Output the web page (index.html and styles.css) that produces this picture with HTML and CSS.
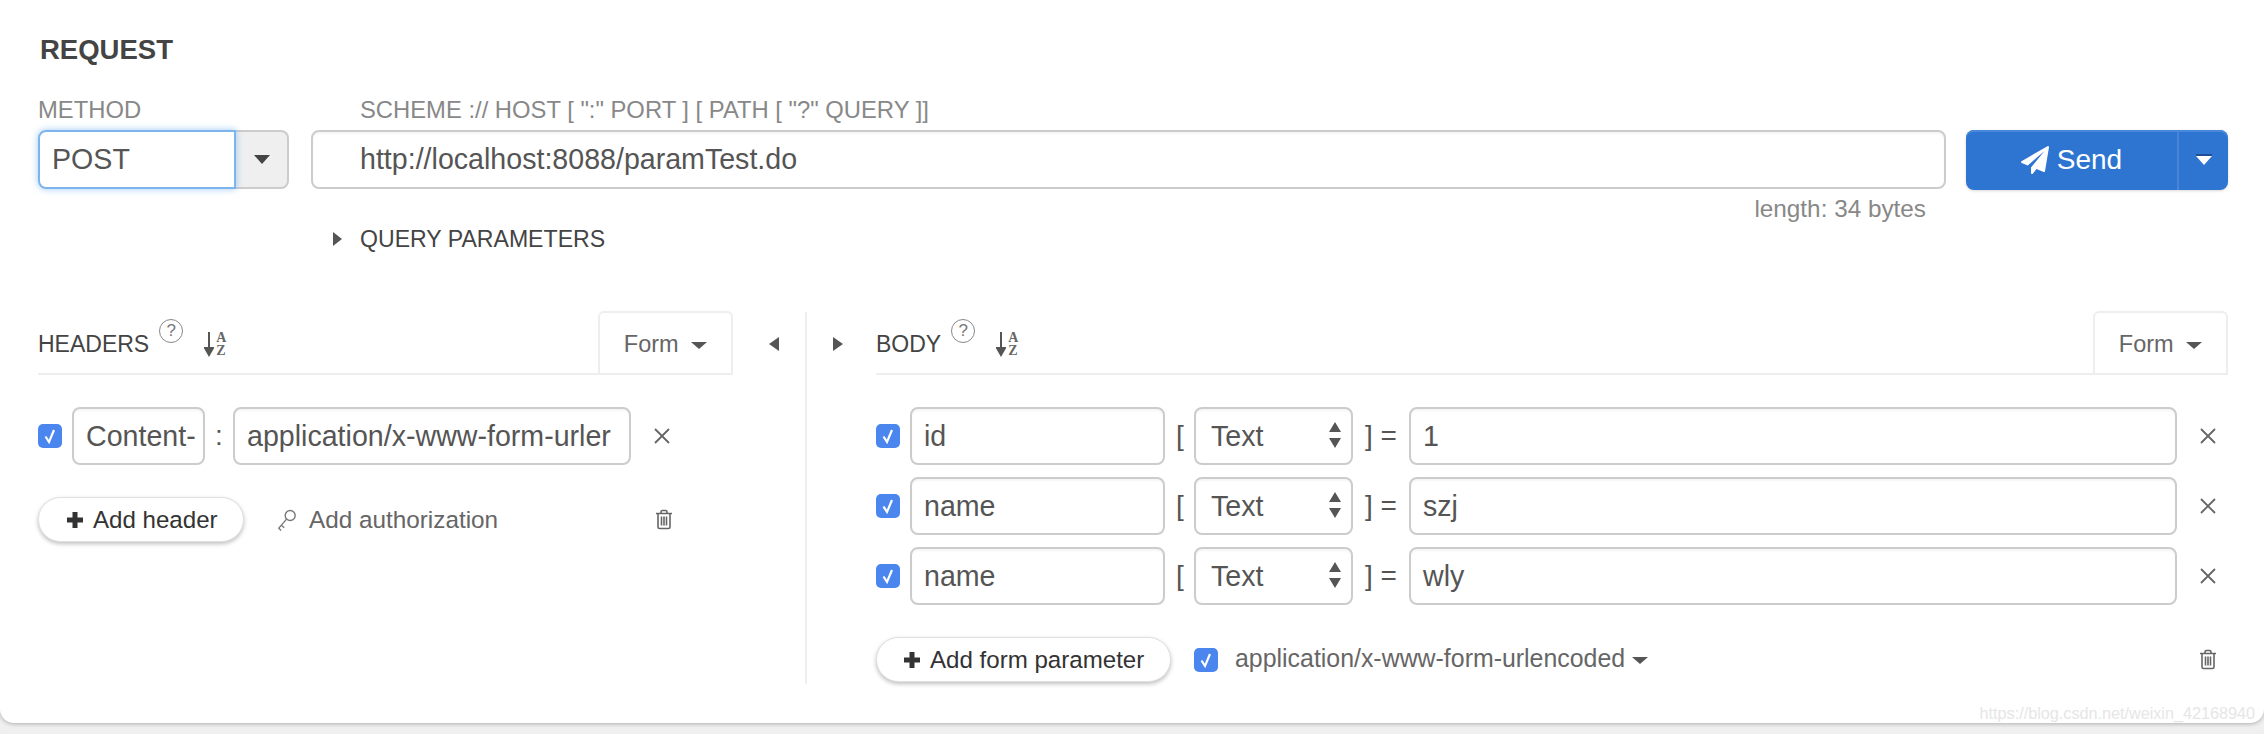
FILE: index.html
```html
<!DOCTYPE html>
<html lang="en">
<head>
<meta charset="utf-8">
<title>Request</title>
<link rel="stylesheet" href="styles.css">
</head>
<body>
<main class="card">
  <h2 class="title">REQUEST</h2>
  <section class="request-line">
    <div class="method">
      <div class="label">METHOD</div>
      <div class="method-group">
        <div class="method-input">POST</div>
        <div class="method-caret"><span class="tri-down dark"></span></div>
      </div>
    </div>
    <div class="url">
      <div class="label url-label">SCHEME :// HOST [ ":" PORT ] [ PATH [ "?" QUERY ]]</div>
      <div class="field url-input">http://localhost:8088/paramTest.do</div>
      <div class="length">length: 34 bytes</div>
      <div class="query"><span class="tri-right"></span><span>QUERY PARAMETERS</span></div>
    </div>
    <div class="send-col">
      <div class="send">
        <div class="send-main">
          <svg class="plane" viewBox="0 0 1792 1792"><path d="M1764 11q33 24 27 64l-256 1536q-5 29-32 45-14 8-31 8-11 0-24-5l-453-185-242 295q-18 23-49 23-13 0-22-4-19-7-30.500-23.500t-11.500-36.500v-349l864-1059-1069 925-395-162q-37-14-40-55-2-40 32-59l1664-960q15-9 32-9 20 0 36 11z"/></svg>
          <span>Send</span>
        </div>
        <div class="send-caret"><span class="tri-down white"></span></div>
      </div>
    </div>
  </section>

  <section class="panels">
    <div class="left">
      <div class="panel-head">
        <span class="panel-title">HEADERS</span>
        <span class="help">?</span>
        <span class="sort"><svg viewBox="0 0 10 26"><path d="M5 1v20M1 17 5 24l4-7z"/></svg><span class="az"><span>A</span><span>Z</span></span></span>
        <span class="tab">Form <span class="tri-down gray"></span></span>
      </div>
      <div class="row header-row">
        <span class="check"><svg viewBox="0 0 24 24"><path d="M7.500 12.500 11 18l5-12"/></svg></span>
        <div class="field hname">Content-</div>
        <span class="colon">:</span>
        <div class="field hvalue">application/x-www-form-urler</div>
        <svg class="x" viewBox="0 0 16 16"><path d="M1 1l14 14M15 1 1 15"/></svg>
      </div>
      <div class="actions">
        <div class="pill add-header"><svg class="plus" viewBox="0 0 18 18"><path d="M9 1v16M1 9h16"/></svg>Add header</div>
        <svg class="key" viewBox="0 0 22 26"><circle cx="14.500" cy="8" r="5.500"/><path d="M10.500 12 2 22l2.500 2.500M5 19l3 2.500"/></svg>
        <span class="auth">Add authorization</span>
        <svg class="trash trash-left" viewBox="0 0 18 20"><path d="M1 4h16M3 4v13.500Q3 19 4.500 19h9q1.500 0 1.500-1.500V4M6 4V2.500Q6 1 7.500 1h3Q12 1 12 2.500V4M6.500 7v9M9 7v9M11.500 7v9"/></svg>
      </div>
    </div>
    <div class="splitter"><span class="tri-left"></span></div>
    <div class="right">
      <div class="expand"><span class="tri-right big"></span></div>
      <div class="body-panel">
        <div class="panel-head">
          <span class="panel-title">BODY</span>
          <span class="help">?</span>
          <span class="sort"><svg viewBox="0 0 10 26"><path d="M5 1v20M1 17 5 24l4-7z"/></svg><span class="az"><span>A</span><span>Z</span></span></span>
          <span class="tab">Form <span class="tri-down gray"></span></span>
        </div>
        <div class="params">
          <div class="row">
            <span class="check"><svg viewBox="0 0 24 24"><path d="M7.500 12.500 11 18l5-12"/></svg></span>
            <div class="field pname">id</div>
            <span class="bracket">[</span>
            <div class="field ptype">Text<svg class="updown" viewBox="0 0 14 28"><path d="M7 1l6 10H1zM7 27l6-10H1z"/></svg></div>
            <span class="bracket close">] =</span>
            <div class="field pvalue">1</div>
            <svg class="x" viewBox="0 0 16 16"><path d="M1 1l14 14M15 1 1 15"/></svg>
          </div>
          <div class="row">
            <span class="check"><svg viewBox="0 0 24 24"><path d="M7.500 12.500 11 18l5-12"/></svg></span>
            <div class="field pname">name</div>
            <span class="bracket">[</span>
            <div class="field ptype">Text<svg class="updown" viewBox="0 0 14 28"><path d="M7 1l6 10H1zM7 27l6-10H1z"/></svg></div>
            <span class="bracket close">] =</span>
            <div class="field pvalue">szj</div>
            <svg class="x" viewBox="0 0 16 16"><path d="M1 1l14 14M15 1 1 15"/></svg>
          </div>
          <div class="row">
            <span class="check"><svg viewBox="0 0 24 24"><path d="M7.500 12.500 11 18l5-12"/></svg></span>
            <div class="field pname">name</div>
            <span class="bracket">[</span>
            <div class="field ptype">Text<svg class="updown" viewBox="0 0 14 28"><path d="M7 1l6 10H1zM7 27l6-10H1z"/></svg></div>
            <span class="bracket close">] =</span>
            <div class="field pvalue">wly</div>
            <svg class="x" viewBox="0 0 16 16"><path d="M1 1l14 14M15 1 1 15"/></svg>
          </div>
        </div>
        <div class="actions body-actions">
          <div class="pill add-param"><svg class="plus" viewBox="0 0 18 18"><path d="M9 1v16M1 9h16"/></svg>Add form parameter</div>
          <span class="check"><svg viewBox="0 0 24 24"><path d="M7.500 12.500 11 18l5-12"/></svg></span>
          <span class="ctype">application/x-www-form-urlencoded <span class="tri-down gray"></span></span>
          <svg class="trash trash-right" viewBox="0 0 18 20"><path d="M1 4h16M3 4v13.500Q3 19 4.500 19h9q1.500 0 1.500-1.500V4M6 4V2.500Q6 1 7.500 1h3Q12 1 12 2.500V4M6.500 7v9M9 7v9M11.500 7v9"/></svg>
        </div>
      </div>
    </div>
  </section>
  <div class="watermark">https://blog.csdn.net/weixin_42168940</div>
</main>
</body>
</html>
```
FILE: styles.css
```css
* { box-sizing: border-box; }
html, body { margin: 0; height: 734px; overflow: hidden; }
body {
  background: #f0f0f0;
  font-family: "Liberation Sans", Arial, sans-serif;
  color: #555;
}
.card {
  position: relative;
  height: 723px;
  background: #fff;
  border-radius: 0 0 14px 14px;
  box-shadow: 0 1px 4px rgba(0,0,0,.28);
  padding: 36px 36px 0 38px;
}
.title {
  margin: 0;
  font-size: 27.500px;
  line-height: 28px;
  font-weight: bold;
  color: #444;
  padding-left: 2px;
}
.request-line { display: flex; margin-top: 33px; }
.label {
  font-size: 23.800px;
  line-height: 26px;
  color: #888;
  height: 26px;
  white-space: nowrap;
}
.method { width: 251px; margin-right: 22px; }
.method-group { display: flex; height: 59px; margin-top: 7px; }
.method-input {
  width: 198px;
  border: 2px solid #7db4ee;
  border-radius: 8px 0 0 8px;
  box-shadow: 0 0 7px rgba(82,160,240,.55);
  padding-left: 12px;
  font-size: 28.600px;
  line-height: 54px;
  color: #555;
  position: relative;
}
.method-caret {
  flex: 1;
  background: #efefef;
  border: 2px solid #ccc;
  border-left: 0;
  border-radius: 0 8px 8px 0;
  display: flex;
  align-items: center;
  justify-content: center;
}
.url { flex: 1; }
.url-label { padding-left: 49px; }
.field {
  border: 2px solid #ccc;
  border-radius: 8px;
  box-shadow: inset 0 2px 2px rgba(0,0,0,.04);
  font-size: 28.600px;
  line-height: 54px;
  height: 58px;
  white-space: nowrap;
  overflow: hidden;
  color: #555;
}
.url-input { height: 59px; margin-top: 7px; padding-left: 47px; }
.length {
  text-align: right;
  font-size: 24.300px;
  line-height: 26px;
  color: #888;
  margin-top: 7px;
  padding-right: 20px;
}
.query {
  display: flex;
  align-items: center;
  font-size: 23.100px;
  line-height: 26px;
  color: #444;
  margin-top: 4px;
  padding-left: 22px;
}
.query .tri-right { margin-right: 18px; }
.send-col { width: 262px; margin-left: 20px; padding-top: 33px; }
.send {
  display: flex;
  height: 60px;
  background: #2e75d2;
  border-radius: 8px;
  box-shadow: inset 0 2px 0 #4a88dc, 0 1px 3px rgba(0,0,0,.15);
  color: #fff;
}
.send-main {
  width: 213px;
  display: flex;
  align-items: center;
  justify-content: center;
  gap: 8px;
  font-size: 28px;
  border-right: 2px solid #4a84d8;
}
.plane { width: 28px; height: 28px; fill: #fff; }
.send-caret { flex: 1; display: flex; align-items: center; justify-content: center; }
.tri-down {
  display: inline-block;
  width: 0; height: 0;
  border-left: 8px solid transparent;
  border-right: 8px solid transparent;
  border-top: 9px solid #444;
  vertical-align: middle;
}
.tri-down.white { border-top-color: #fff; box-shadow: 0 -2px 0 #1d4f96; }
.tri-down.gray { border-top: 7px solid #555; }
.tri-right {
  display: inline-block;
  width: 0; height: 0;
  border-top: 7px solid transparent;
  border-bottom: 7px solid transparent;
  border-left: 9px solid #555;
}
.tri-left {
  display: inline-block;
  width: 0; height: 0;
  border-top: 7px solid transparent;
  border-bottom: 7px solid transparent;
  border-right: 10px solid #555;
}
.panels { display: flex; margin-top: 60px; height: 372px; }
.left { width: 695px; }
.panel-head {
  display: flex;
  align-items: center;
  position: relative;
  height: 63px;
  border-bottom: 2px solid #eee;
}
.panel-title { font-size: 23px; color: #444; margin-top: 4px; }
.help {
  width: 24px; height: 24px;
  border: 1.500px solid #888;
  border-radius: 50%;
  font-size: 17px;
  line-height: 21px;
  text-align: center;
  color: #777;
  margin: -24px 0 0 10px;
}
.sort { display: flex; margin-left: 21px; align-items: center; margin-top: 2px; }
.sort svg { width: 10px; height: 26px; stroke: #555; stroke-width: 2; fill: #555; }
.az {
  display: flex; flex-direction: column;
  font-family: "Liberation Serif", serif;
  font-size: 14px; line-height: 13px; font-weight: bold; color: #666;
  margin-left: 2px;
}
.tab {
  margin-left: auto;
  width: 135px;
  height: 63px;
  border: 2px solid #eee;
  border-bottom: 0;
  border-radius: 6px 6px 0 0;
  font-size: 23.500px;
  text-align: center;
  line-height: 62px;
  color: #666;
}
.tab .tri-down { margin-left: 6px; }
.row { display: flex; align-items: center; height: 58px; }
.header-row { margin-top: 32px; }
.check {
  flex: none;
  width: 24px; height: 24px;
  background: #4a86ee;
  border-radius: 5px;
  display: flex;
}
.check svg { fill: none; stroke: #fff; stroke-width: 2.200; }
.hname { width: 133px; margin-left: 10px; padding-left: 12px; }
.colon { width: 28px; text-align: center; font-size: 28px; color: #555; }
.hvalue { width: 398px; padding-left: 12px; }
.x { width: 16px; height: 16px; stroke: #666; stroke-width: 1.800; fill: none; margin-left: 23px; flex: none; }
.actions { display: flex; align-items: center; margin-top: 32px; height: 45px; }
.pill {
  display: flex;
  align-items: center;
  height: 45px;
  border: 1px solid #e0e0e0;
  border-radius: 23px;
  box-shadow: 0 2px 4px rgba(0,0,0,.25);
  font-size: 24.100px;
  color: #333;
  background: #fff;
  white-space: nowrap;
}
.plus { width: 18px; height: 18px; stroke: #333; stroke-width: 5; margin-right: 9px; }
.add-header { width: 206px; padding-left: 27px; }
.key { width: 20px; height: 26px; fill: none; stroke: #777; stroke-width: 1.500; margin-left: 33px; }
.auth { font-size: 24.300px; color: #666; margin-left: 12px; }
.trash { width: 18px; height: 21px; fill: none; stroke: #666; stroke-width: 1.600; flex: none; }
.trash-left { margin-left: 157px; }
.splitter {
  width: 72px;
  display: flex;
  justify-content: flex-start;
  padding: 25px 0 0 36px;
}
.right { flex: 1; display: flex; border-left: 2px solid #eee; }
.expand { width: 69px; padding: 25px 0 0 26px; }
.tri-right.big { border-left-width: 10px; }
.body-panel { flex: 1; }
.params { margin-top: 32px; display: flex; flex-direction: column; gap: 12px; }
.pname { width: 255px; margin-left: 10px; padding-left: 12px; }
.bracket { width: 30px; text-align: center; font-size: 28px; color: #555; }
.ptype {
  width: 159px;
  margin-left: -1px;
  padding-left: 15px;
  position: relative;
}
.updown { position: absolute; right: 9px; top: 12px; width: 14px; height: 28px; fill: #555; }
.close { width: 56px; padding-left: 0; text-align: center; white-space: nowrap; }
.pvalue { width: 768px; padding-left: 12px; }
.params .x { margin-left: 23px; }
.body-actions { margin-top: 32px; }
.add-param { width: 295px; padding-left: 26px; }
.body-actions .check { margin-left: 23px; }
.ctype { font-size: 24.900px; color: #666; margin-left: 17px; white-space: nowrap; margin-top: -2px; }
.trash-right { margin-left: auto; margin-right: 11px; }
.watermark {
  position: absolute;
  right: 9px;
  bottom: 0;
  font-size: 16.200px;
  line-height: 20px;
  color: #e6e6e6;
}
```
